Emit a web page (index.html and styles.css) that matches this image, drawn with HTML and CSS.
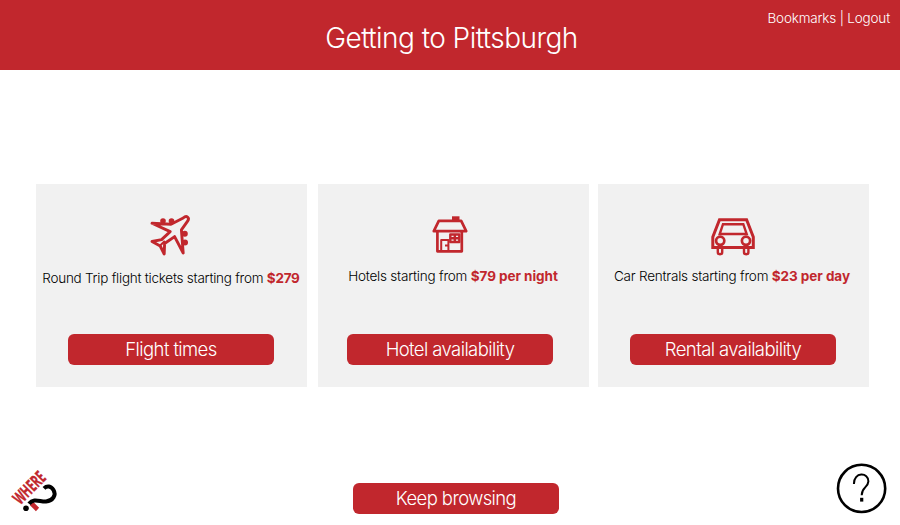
FILE: index.html
```html
<!DOCTYPE html>
<html lang="en">
<head>
<meta charset="utf-8">
<title>Getting to Pittsburgh</title>
<link rel="stylesheet" href="styles.css">
</head>
<body>
<header class="header">
  <h1 class="title">Getting to Pittsburgh</h1>
  <nav class="nav"><a>Bookmarks</a> | <a>Logout</a></nav>
</header>
<main class="cards">
  <section class="card flight">
    <svg class="icon" viewBox="0 0 60 60">
      <path d="M12 18.3 31 19.3 43.2 13C46.6 10 50 12.6 47.6 16.2L41.4 24.8 43.2 48 34.6 31.6 24.6 38.5 24.2 49 20.2 41 12 36.5 21.6 34.6 30.2 26.6Z" fill="none" stroke="#c1272d" stroke-width="2.9" stroke-linejoin="round"/>
      <path d="M20.2 40.5 24.8 36" stroke="#c1272d" stroke-width="2"/>
      <g fill="#c1272d"><circle cx="23" cy="16" r="2.8"/><circle cx="31.5" cy="16" r="2.8"/><circle cx="44.8" cy="28.8" r="3"/><circle cx="45" cy="37.4" r="3"/></g>
    </svg>
    <p class="offer">Round Trip flight tickets starting from <strong>$279</strong></p>
    <a class="button">Flight times</a>
  </section>
  <section class="card hotel">
    <svg class="icon" viewBox="0 0 60 60">
      <g fill="none" stroke="#c1272d" stroke-width="2.7" stroke-linejoin="round">
        <path d="M16.8 15.8H39.2L44.2 26.2H11.8Z"/>
        <path d="M15.4 27V46.3H39.8V27"/>
        <path d="M19.2 46V35H26.4V46" stroke-width="2"/>
        <path d="M28.3 29.5H37.3V37H28.3ZM32.8 29V37M28.3 33.2H37.3" stroke-width="2.4"/>
        <path d="M23 40.5H26" stroke-width="2"/>
      </g>
      <path d="M30 11.3H37.5V16H30Z" fill="#c1272d"/>
    </svg>
    <p class="offer">Hotels starting from <strong>$79 per night</strong></p>
    <a class="button">Hotel availability</a>
  </section>
  <section class="card car">
    <svg class="icon" viewBox="0 0 60 60">
      <g fill="none" stroke="#c1272d" stroke-width="3">
        <path d="M16.5 14.7H43.6L50.3 32V42.5H9.8V32Z"/>
        <path d="M20 19.2H40.3L43.7 29H16.7Z" stroke-width="2.4"/>
        <circle cx="17.2" cy="35.8" r="4.1" stroke-width="2.7"/>
        <circle cx="43" cy="35.8" r="4.1" stroke-width="2.7"/>
        <path d="M14.8 43V47.2Q14.8 49.2 17 49.2T19.2 47.2V43M41 43V47.2Q41 49.2 43.2 49.2T45.4 47.2V43" stroke-width="2.4"/>
      </g>
    </svg>
    <p class="offer">Car Rentrals starting from <strong>$23 per day</strong></p>
    <a class="button">Rental availability</a>
  </section>
</main>
<footer class="footer">
  <svg class="logo" viewBox="0 0 70 65">
    <text class="logo-word" transform="translate(20.2 45.6) rotate(-45)" textLength="38" lengthAdjust="spacingAndGlyphs">WHERE</text>
    <path d="M31.5 43.5 37.5 49.5" stroke="#c1272d" stroke-width="4.6" fill="none"/>
    <path d="M29 43.8C34 37.5 40 42 46 41.5C53 41 56.5 35 53.5 30C51 26 47 25.4 44 28.4" stroke="#000" stroke-width="4" fill="none"/>
    <circle cx="26" cy="48.3" r="2.8"/>
  </svg>
  <a class="button keep">Keep browsing</a>
  <svg class="help" viewBox="0 0 75 70">
    <circle cx="36.6" cy="33.4" r="23.6" fill="none" stroke="#000" stroke-width="2.6"/>
    <path d="M28.9 29C28.6 16.6 43.8 17.2 43.4 26.4C43.1 32.5 36.7 32 36.7 40.2" fill="none" stroke="#000" stroke-width="2"/>
    <path d="M35.1 42.8H38.3V46.6H35.1Z"/>
  </svg>
</footer>
</body>
</html>
```
FILE: styles.css
```css
* { box-sizing: border-box; }
body {
  margin: 0;
  height: 525px;
  display: flex;
  flex-direction: column;
  overflow: hidden;
  background: #fff;
  color: #000;
  font-family: Inter, "Liberation Sans", sans-serif;
  font-weight: 300;
  white-space: nowrap;
}
.header {
  height: 70px;
  flex: none;
  display: grid;
  grid-template-columns: 1fr auto 1fr;
  background: #c1272d;
  color: #fff;
}
.title {
  grid-column: 2;
  margin: 21px 0 0 3px;
  font-size: 28px;
  line-height: 34px;
  font-weight: 300;
  letter-spacing: -0.55px;
}
.nav {
  justify-self: end;
  margin: 10px 10px 0 0;
  font-size: 13.5px;
  line-height: 17px;
  letter-spacing: -0.18px;
}
.cards {
  margin: 114px 0 0 36px;
  display: grid;
  grid-template-columns: 271px 271px 271px;
  column-gap: 10px;
  height: 203px;
}
.card {
  display: flex;
  flex-direction: column;
  background: #f1f1f1;
}
.hotel { margin: 0 -1px 0 1px; }
.icon {
  width: 60px;
  height: 60px;
  margin: 21px 0 0 104px;
}
.car .icon { margin-left: 105px; }
.offer {
  margin: 1px 0 0;
  padding-right: 1px;
  text-align: center;
  font-size: 13.5px;
  line-height: 20px;
  letter-spacing: -0.22px;
}
.flight .offer { margin-top: 3px; letter-spacing: -0.25px; }
.car .offer { padding-right: 3px; }
.offer strong { color: #c1272d; font-weight: 700; letter-spacing: -0.05px; }
.flight .offer strong { letter-spacing: -0.25px; }
.button {
  width: 206px;
  height: 31px;
  border-radius: 6px;
  background: #c1272d;
  color: #fff;
  font-size: 18.5px;
  line-height: 31px;
  font-weight: 300;
  letter-spacing: -0.6px;
  text-align: center;
}
.card .button { margin: auto 0 22px 32px; }
.hotel .button { margin-left: 29px; }
.footer {
  margin-top: 68px;
  display: grid;
  grid-template-columns: 353px 206px 1fr;
  height: 70px;
}
.logo { width: 70px; height: 65px; margin-top: 5px; overflow: visible; }
.logo-word {
  fill: #c1272d;
  stroke: #c1272d;
  stroke-width: 0.4px;
  font: 700 17.5px "Open Sans", sans-serif;
}
.keep { margin-top: 28px; }
.help { width: 75px; height: 70px; justify-self: end; }
```
